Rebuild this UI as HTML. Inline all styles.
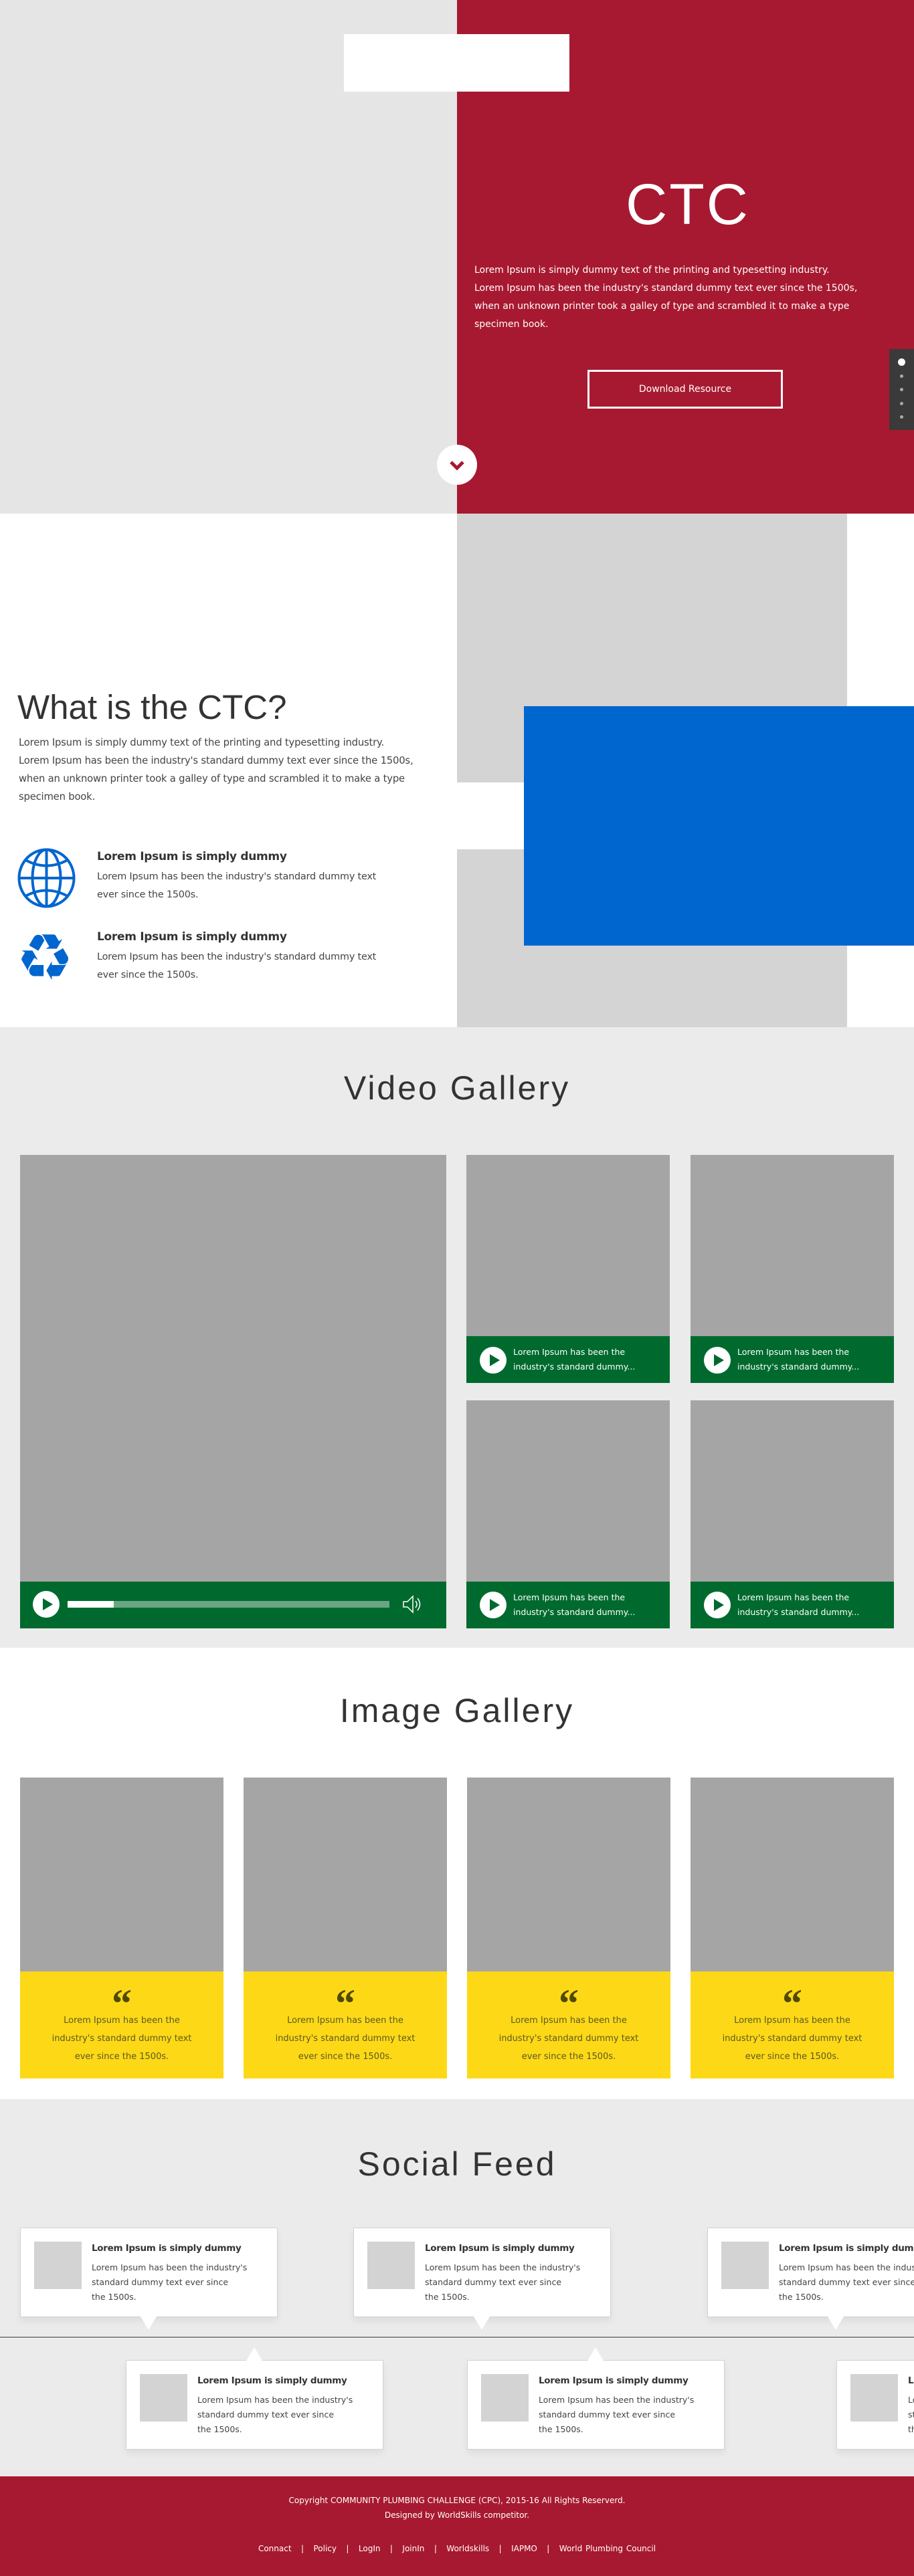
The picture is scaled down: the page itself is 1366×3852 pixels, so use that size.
<!DOCTYPE html>
<html><head><meta charset="utf-8">
<style>
*{margin:0;padding:0;box-sizing:border-box}
body{width:1366px;height:3852px;position:relative;font-family:"DejaVu Sans","Liberation Sans",sans-serif;overflow:hidden;background:#fff}
.a{position:absolute}
.h{font-family:"Liberation Sans",sans-serif;color:#333;font-weight:normal}
.gray{background:#a5a5a5}
.green{background:#006a2e}
.play{width:40px;height:40px;border-radius:50%;background:#fff}
.play:after{content:"";position:absolute;left:15px;top:11px;border-left:15px solid #006a2e;border-top:9px solid transparent;border-bottom:9px solid transparent}
.vt{color:#fff;font-size:12.5px;line-height:22px;white-space:nowrap}
.yel{background:#fdd817;text-align:center;color:#5b5a1e;font-size:13px;line-height:27px}
.q{font-family:"Liberation Serif",serif;font-size:60px;line-height:60px;color:#4f4a00;font-weight:bold;height:42px;overflow:hidden}
.card{background:#fff;border:1px solid #d2d2d2;width:385px;height:134px;box-shadow:0 6px 10px rgba(0,0,0,.06)}
.card .t{position:absolute;left:20px;top:20px;width:71px;height:71px;background:#d3d3d3}
.card .ti{position:absolute;left:106px;top:22px;font-size:13.5px;font-weight:bold;color:#333;white-space:nowrap;letter-spacing:-0.3px}
.card .tx{position:absolute;left:106px;top:48px;font-size:12.5px;line-height:22px;color:#444;white-space:nowrap}
.pd{width:0;height:0;border-left:12px solid transparent;border-right:12px solid transparent;border-top:20px solid #fff}
.pu{width:0;height:0;border-left:12px solid transparent;border-right:12px solid transparent;border-bottom:20px solid #fff}
.sec{font-size:50px;line-height:60px;letter-spacing:3px;text-align:center;width:1366px;left:0}
</style></head><body>

<!-- HERO -->
<div class="a" style="left:0;top:0;width:683px;height:768px;background:#e5e5e5"></div>
<div class="a" style="left:683px;top:0;width:683px;height:768px;background:#a71930"></div>
<div class="a" style="left:514px;top:51px;width:337px;height:86px;background:#fff"></div>
<div class="a" style="left:683px;top:256px;width:690px;text-align:center;color:#fff;font-family:'Liberation Sans',sans-serif;font-size:86px;line-height:100px;letter-spacing:3px">CTC</div>
<div class="a" style="left:709px;top:391px;color:#fff;font-size:14px;line-height:27px;white-space:nowrap">Lorem Ipsum is simply dummy text of the printing and typesetting industry.<br>Lorem Ipsum has been the industry's standard dummy text ever since the 1500s,<br>when an unknown printer took a galley of type and scrambled it to make a type<br>specimen book.</div>
<div class="a" style="left:878px;top:553px;width:292px;height:58px;border:3px solid #fff;color:#fff;font-size:14px;line-height:52px;text-align:center">Download Resource</div>
<div class="a" style="left:1329px;top:522px;width:37px;height:121px;background:#3a3a3a"></div>
<div class="a" style="left:1342px;top:536px;width:11px;height:11px;border-radius:50%;background:#fff"></div>
<div class="a" style="left:1345px;top:560px;width:5px;height:5px;border-radius:50%;background:#aaa"></div>
<div class="a" style="left:1345px;top:580px;width:5px;height:5px;border-radius:50%;background:#aaa"></div>
<div class="a" style="left:1345px;top:601px;width:5px;height:5px;border-radius:50%;background:#aaa"></div>
<div class="a" style="left:1345px;top:621px;width:5px;height:5px;border-radius:50%;background:#aaa"></div>
<div class="a" style="left:653px;top:665px;width:60px;height:60px;border-radius:50%;background:#fff"></div>
<svg class="a" style="left:672px;top:688px" width="22" height="16" viewBox="0 0 22 16"><path d="M2 3 L11 12 L20 3" fill="none" stroke="#a71930" stroke-width="5"/></svg>

<!-- WHAT IS -->
<div class="a" style="left:683px;top:768px;width:583px;height:768px;background:#d4d4d4"></div>
<div class="a" style="left:683px;top:1170px;width:120px;height:100px;background:#fff"></div>
<div class="a" style="left:783px;top:1056px;width:583px;height:358px;background:#0066cf"></div>
<div class="a h" style="left:26px;top:1028px;font-size:51px;line-height:60px">What is the CTC?</div>
<div class="a" style="left:28px;top:1097px;color:#444;font-size:14.8px;line-height:27px;white-space:nowrap;letter-spacing:-0.2px">Lorem Ipsum is simply dummy text of the printing and typesetting industry.<br>Lorem Ipsum has been the industry's standard dummy text ever since the 1500s,<br>when an unknown printer took a galley of type and scrambled it to make a type<br>specimen book.</div>
<svg class="a" style="left:26px;top:1268px" width="87" height="90" viewBox="0 0 87 90"><g fill="none" stroke="#0066cf" stroke-width="4"><ellipse cx="43.5" cy="45" rx="41" ry="42.5"/><ellipse cx="43.5" cy="45" rx="21" ry="42.5"/><line x1="43.5" y1="2" x2="43.5" y2="88"/><line x1="2" y1="45" x2="85" y2="45"/><path d="M12 18 Q43.5 35 75 18"/><path d="M12 72 Q43.5 55 75 72"/></g></svg>
<div class="a" style="left:24px;top:1382px;font-size:96px;line-height:100px;color:#0066cf;font-family:'DejaVu Sans',sans-serif">♻</div>
<div class="a" style="left:145px;top:1271px;font-size:17px;color:#333;white-space:nowrap;font-weight:bold;letter-spacing:-0.3px">Lorem Ipsum is simply dummy</div>
<div class="a" style="left:145px;top:1298px;font-size:14.4px;line-height:27px;color:#444;white-space:nowrap;letter-spacing:-0.2px">Lorem Ipsum has been the industry's standard dummy text<br>ever since the 1500s.</div>
<div class="a" style="left:145px;top:1391px;font-size:17px;color:#333;white-space:nowrap;font-weight:bold;letter-spacing:-0.3px">Lorem Ipsum is simply dummy</div>
<div class="a" style="left:145px;top:1418px;font-size:14.4px;line-height:27px;color:#444;white-space:nowrap;letter-spacing:-0.2px">Lorem Ipsum has been the industry's standard dummy text<br>ever since the 1500s.</div>

<!-- VIDEO -->
<div class="a" style="left:0;top:1536px;width:1366px;height:928px;background:#ebebeb"></div>
<div class="a h sec" style="top:1597px">Video Gallery</div>
<div class="a gray" style="left:30px;top:1727px;width:637px;height:638px"></div>
<div class="a green" style="left:30px;top:2365px;width:637px;height:70px"></div>
<div class="a play" style="left:49px;top:2379px"></div>
<div class="a" style="left:101px;top:2394px;width:481px;height:10px;background:#6aa583"></div>
<div class="a" style="left:101px;top:2394px;width:69px;height:10px;background:#fff"></div>
<svg class="a" style="left:601px;top:2385px" width="34" height="28" viewBox="0 0 34 28"><g fill="none" stroke="#fff" stroke-width="1.5"><path d="M2 10 H8 L16 2 V26 L8 18 H2 Z"/><path d="M20 9 Q24 14 20 19"/><path d="M23 5 Q30 14 23 23"/></g></svg>

<div class="a gray" style="left:697px;top:1727px;width:304px;height:271px"></div>
<div class="a green" style="left:697px;top:1998px;width:304px;height:70px"></div>
<div class="a play" style="left:717px;top:2014px"></div>
<div class="a vt" style="left:767px;top:2011px">Lorem Ipsum has been the<br>industry's standard dummy...</div>
<div class="a gray" style="left:1032px;top:1727px;width:304px;height:271px"></div>
<div class="a green" style="left:1032px;top:1998px;width:304px;height:70px"></div>
<div class="a play" style="left:1052px;top:2014px"></div>
<div class="a vt" style="left:1102px;top:2011px">Lorem Ipsum has been the<br>industry's standard dummy...</div>
<div class="a gray" style="left:697px;top:2094px;width:304px;height:271px"></div>
<div class="a green" style="left:697px;top:2365px;width:304px;height:70px"></div>
<div class="a play" style="left:717px;top:2380px"></div>
<div class="a vt" style="left:767px;top:2378px">Lorem Ipsum has been the<br>industry's standard dummy...</div>
<div class="a gray" style="left:1032px;top:2094px;width:304px;height:271px"></div>
<div class="a green" style="left:1032px;top:2365px;width:304px;height:70px"></div>
<div class="a play" style="left:1052px;top:2380px"></div>
<div class="a vt" style="left:1102px;top:2378px">Lorem Ipsum has been the<br>industry's standard dummy...</div>

<!-- IMAGE GALLERY -->
<div class="a h sec" style="top:2528px">Image Gallery</div>
<div class="a gray" style="left:30px;top:2658px;width:304px;height:290px"></div>
<div class="a gray" style="left:364px;top:2658px;width:304px;height:290px"></div>
<div class="a gray" style="left:698px;top:2658px;width:304px;height:290px"></div>
<div class="a gray" style="left:1032px;top:2658px;width:304px;height:290px"></div>
<div class="a yel" style="left:30px;top:2948px;width:304px;height:160px;padding-top:18px"><div class="q">“</div>Lorem Ipsum has been the<br>industry's standard dummy text<br>ever since the 1500s.</div>
<div class="a yel" style="left:364px;top:2948px;width:304px;height:160px;padding-top:18px"><div class="q">“</div>Lorem Ipsum has been the<br>industry's standard dummy text<br>ever since the 1500s.</div>
<div class="a yel" style="left:698px;top:2948px;width:304px;height:160px;padding-top:18px"><div class="q">“</div>Lorem Ipsum has been the<br>industry's standard dummy text<br>ever since the 1500s.</div>
<div class="a yel" style="left:1032px;top:2948px;width:304px;height:160px;padding-top:18px"><div class="q">“</div>Lorem Ipsum has been the<br>industry's standard dummy text<br>ever since the 1500s.</div>

<!-- SOCIAL -->
<div class="a" style="left:0;top:3139px;width:1366px;height:564px;background:#ebebeb;overflow:hidden">
<div class="a h sec" style="top:67px">Social Feed</div>
<div class="a" style="left:0;top:355px;width:1366px;height:2px;background:#8a8a8a"></div>
<div class="a" style="left:0;top:357px;width:1366px;height:1px;background:#fff"></div>

<div class="a card" style="left:30px;top:192px"><div class="t"></div><div class="ti">Lorem Ipsum is simply dummy</div><div class="tx">Lorem Ipsum has been the industry's<br>standard dummy text ever since<br>the 1500s.</div></div>
<div class="a pd" style="left:210px;top:325px"></div>
<div class="a card" style="left:528px;top:192px"><div class="t"></div><div class="ti">Lorem Ipsum is simply dummy</div><div class="tx">Lorem Ipsum has been the industry's<br>standard dummy text ever since<br>the 1500s.</div></div>
<div class="a pd" style="left:708px;top:325px"></div>
<div class="a card" style="left:1057px;top:192px"><div class="t"></div><div class="ti">Lorem Ipsum is simply dummy</div><div class="tx">Lorem Ipsum has been the industry's<br>standard dummy text ever since<br>the 1500s.</div></div>
<div class="a pd" style="left:1237px;top:325px"></div>

<div class="a card" style="left:188px;top:390px"><div class="t"></div><div class="ti">Lorem Ipsum is simply dummy</div><div class="tx">Lorem Ipsum has been the industry's<br>standard dummy text ever since<br>the 1500s.</div></div>
<div class="a pu" style="left:368px;top:371px"></div>
<div class="a card" style="left:698px;top:390px"><div class="t"></div><div class="ti">Lorem Ipsum is simply dummy</div><div class="tx">Lorem Ipsum has been the industry's<br>standard dummy text ever since<br>the 1500s.</div></div>
<div class="a pu" style="left:878px;top:371px"></div>
<div class="a card" style="left:1250px;top:390px"><div class="t"></div><div class="ti">Lorem Ipsum is simply dummy</div><div class="tx">Lorem Ipsum has been the industry's<br>standard dummy text ever since<br>the 1500s.</div></div>
</div>

<!-- FOOTER -->
<div class="a" style="left:0;top:3703px;width:1366px;height:149px;background:#a71930"></div>
<div class="a" style="left:0;top:3728px;width:1366px;text-align:center;color:#fff;font-size:12px;line-height:22px">Copyright COMMUNITY PLUMBING CHALLENGE (CPC), 2015-16 All Rights Reserverd.<br>Designed by WorldSkills competitor.</div>
<div class="a" style="left:0;top:3801px;width:1366px;text-align:center;color:#fff;font-size:12px;line-height:20px;word-spacing:1px">Connact &nbsp; | &nbsp; Policy &nbsp; | &nbsp; LogIn &nbsp; | &nbsp; JoinIn &nbsp; | &nbsp; Worldskills &nbsp; | &nbsp; IAPMO &nbsp; | &nbsp; World Plumbing Council</div>
</body></html>
